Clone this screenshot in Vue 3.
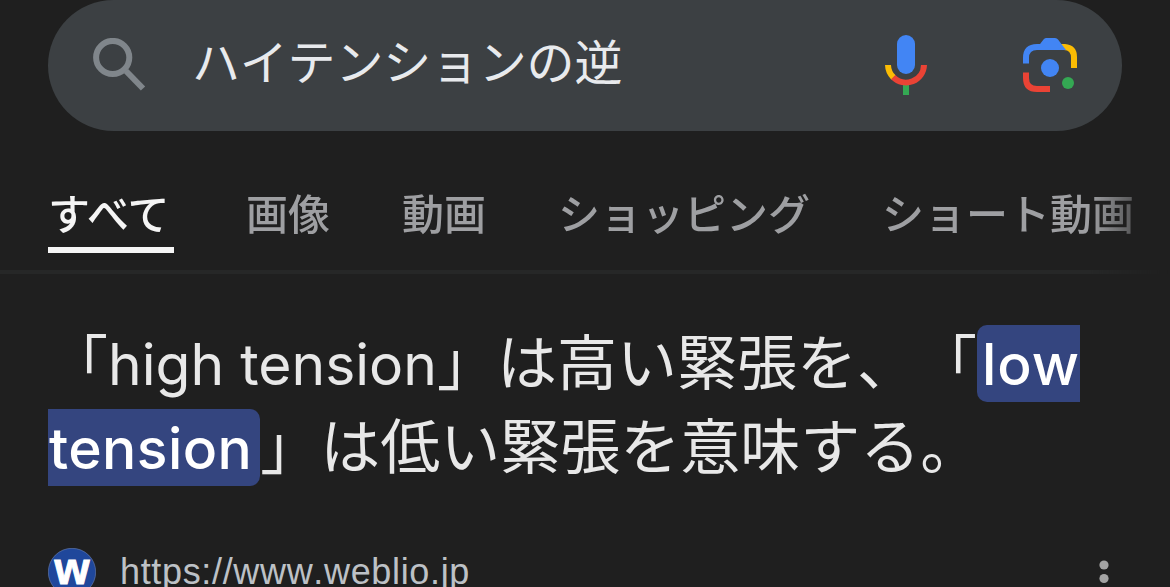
<template>
  <div class="page">
    <header class="search-bar">
      <svg class="search-icon" viewBox="0 0 54 54">
        <circle cx="19.7" cy="19.5" r="16.6" />
        <path d="M33 33L50 50.5" />
      </svg>
      <span class="query">{{ query }}</span>
      <svg class="mic-icon" viewBox="0 0 44 62">
        <rect x="13" y="1" width="18" height="39" rx="9" fill="#4285f4" />
        <path d="M19 51h6v10h-6z" fill="#34a853" />
        <path d="M4 31A18 18 0 0 0 9.5 43.5" stroke="#fbbc04" />
        <path d="M9.2 43.2A18 18 0 0 0 40 31" stroke="#ea4335" />
      </svg>
      <svg class="lens-icon" viewBox="0 0 56 56">
        <path d="M4 26.5V21Q4 10 15 10H40" stroke="#4285f4" />
        <path d="M38 7H43Q55 8 55 20V31H49V21Q49 13 42 13Z" fill="#fbbc04" />
        <path d="M15 11L21.5 2.5Q22.5 1 24 1H33Q35 1 36 2.5L44 13H15Z" fill="#4285f4" />
        <path d="M4 35.5V41Q4 52 15 52H28" stroke="#ea4335" />
        <circle cx="28" cy="31" r="9" fill="#4285f4" />
        <circle cx="46" cy="46" r="6" fill="#34a853" />
      </svg>
    </header>

    <nav class="tabs">
      <a
        v-for="tab in tabs"
        :key="tab"
        class="tab"
        :class="{ active: tab === activeTab }"
        @click="activeTab = tab"
      >{{ tab }}</a>
    </nav>

    <main class="answer">
      <div class="line">「<span class="latin">high tension</span>」は高い緊張を、「<mark class="start">low</mark></div>
      <div class="line"><mark class="end">tension</mark>」は低い緊張を意味する。</div>
    </main>

    <footer class="source">
      <svg class="favicon" viewBox="0 0 48 48">
        <circle cx="24" cy="24" r="23.7" />
        <text x="24" y="36" text-anchor="middle">w</text>
      </svg>
      <span class="url">https://www.weblio.jp</span>
      <svg class="more" viewBox="0 0 10 40">
        <circle cx="5" cy="5" r="4.6" />
        <circle cx="5" cy="18.5" r="4.6" />
        <circle cx="5" cy="32" r="4.6" />
      </svg>
    </footer>
  </div>
</template>

<script setup>
import { ref } from "vue";

const query = ref("ハイテンションの逆");
const tabs = ["すべて", "画像", "動画", "ショッピング", "ショート動画"];
const activeTab = ref("すべて");
</script>

<style>
body {
  margin: 0;
  overflow: hidden;
  background: #1f1f1f;
}
</style>

<style scoped>
.page {
  height: 587px;
  overflow: hidden;
  background: #1f1f1f;
  font-family: "Noto Sans CJK JP", sans-serif;
  font-kerning: none;
  text-spacing-trim: space-all;
}

svg {
  flex: none;
  fill: none;
}

.search-bar {
  display: flex;
  align-items: flex-start;
  box-sizing: border-box;
  width: 1074px;
  height: 131px;
  margin: 0 48px;
  padding-left: 45px;
  border-radius: 66px;
  background: #3c4043;
}

.search-icon {
  width: 54px;
  height: 54px;
  margin-top: 38px;
  stroke: #80868b;
  stroke-width: 6;
}

.query {
  width: 692px;
  margin-left: 45px;
  margin-top: 24px;
  color: #e8eaed;
  font-size: 48px;
  letter-spacing: -0.2px;
  line-height: 70px;
  white-space: nowrap;
}

.mic-icon {
  width: 44px;
  height: 62px;
  margin-top: 34px;
  stroke-width: 6;
}

.lens-icon {
  width: 56px;
  height: 56px;
  margin-left: 94px;
  margin-top: 37px;
  stroke-width: 6;
}

.tabs {
  display: flex;
  gap: 72px;
  height: 139px;
  padding-left: 48px;
  border-bottom: 4px solid #262727;
  -webkit-mask-image: linear-gradient(to right, #000 1090px, transparent 1168px);
  mask-image: linear-gradient(to right, #000 1090px, transparent 1168px);
}

.tab {
  flex: none;
  box-sizing: border-box;
  height: 122px;
  padding-top: 51px;
  color: #9e9fa2;
  font-size: 42px;
  font-weight: 500;
  line-height: 60px;
  cursor: pointer;
}

.tab.active {
  min-width: 126px;
  color: #f5f5f5;
  border-bottom: 6px solid #f5f5f5;
  font-kerning: normal;
}

.answer {
  padding: 43px 48px 0;
  color: #e8e8e8;
  font-size: 60px;
}

.line {
  height: 84px;
  line-height: 84px;
  white-space: nowrap;
}

.latin,
mark {
  font-family: Inter, sans-serif;
  font-size: 57px;
  font-kerning: normal;
  line-height: 1;
}

mark {
  padding: 5px 0 3px;
  color: #fff;
  background: #34457f;
  font-weight: 500;
  letter-spacing: 0.4px;
}

mark.start {
  padding-left: 5px;
  border-radius: 10px 0 0 10px;
  letter-spacing: 1px;
}

mark.end {
  padding-left: 1px;
  padding-right: 8px;
  border-radius: 0 10px 10px 0;
}

.source {
  display: flex;
  align-items: flex-start;
  padding: 63px 61px 0 48px;
}

.favicon {
  width: 48px;
  height: 48px;
}

.favicon circle {
  fill: #1f479b;
  stroke: #6a82b5;
  stroke-width: 0.6;
}

.favicon text {
  fill: #fff;
  stroke: #fff;
  stroke-width: 1;
  font-family: "Liberation Sans", Arial, sans-serif;
  font-size: 45px;
  font-weight: 700;
}

.url {
  flex: 1;
  margin-left: 24px;
  margin-top: 3px;
  color: #bdc1c6;
  font-family: "Liberation Sans", Arial, sans-serif;
  font-size: 36px;
  letter-spacing: 0.66px;
  line-height: 42px;
}

.more {
  width: 10px;
  height: 40px;
  margin-top: 12px;
  fill: #a3a3a3;
}
</style>
